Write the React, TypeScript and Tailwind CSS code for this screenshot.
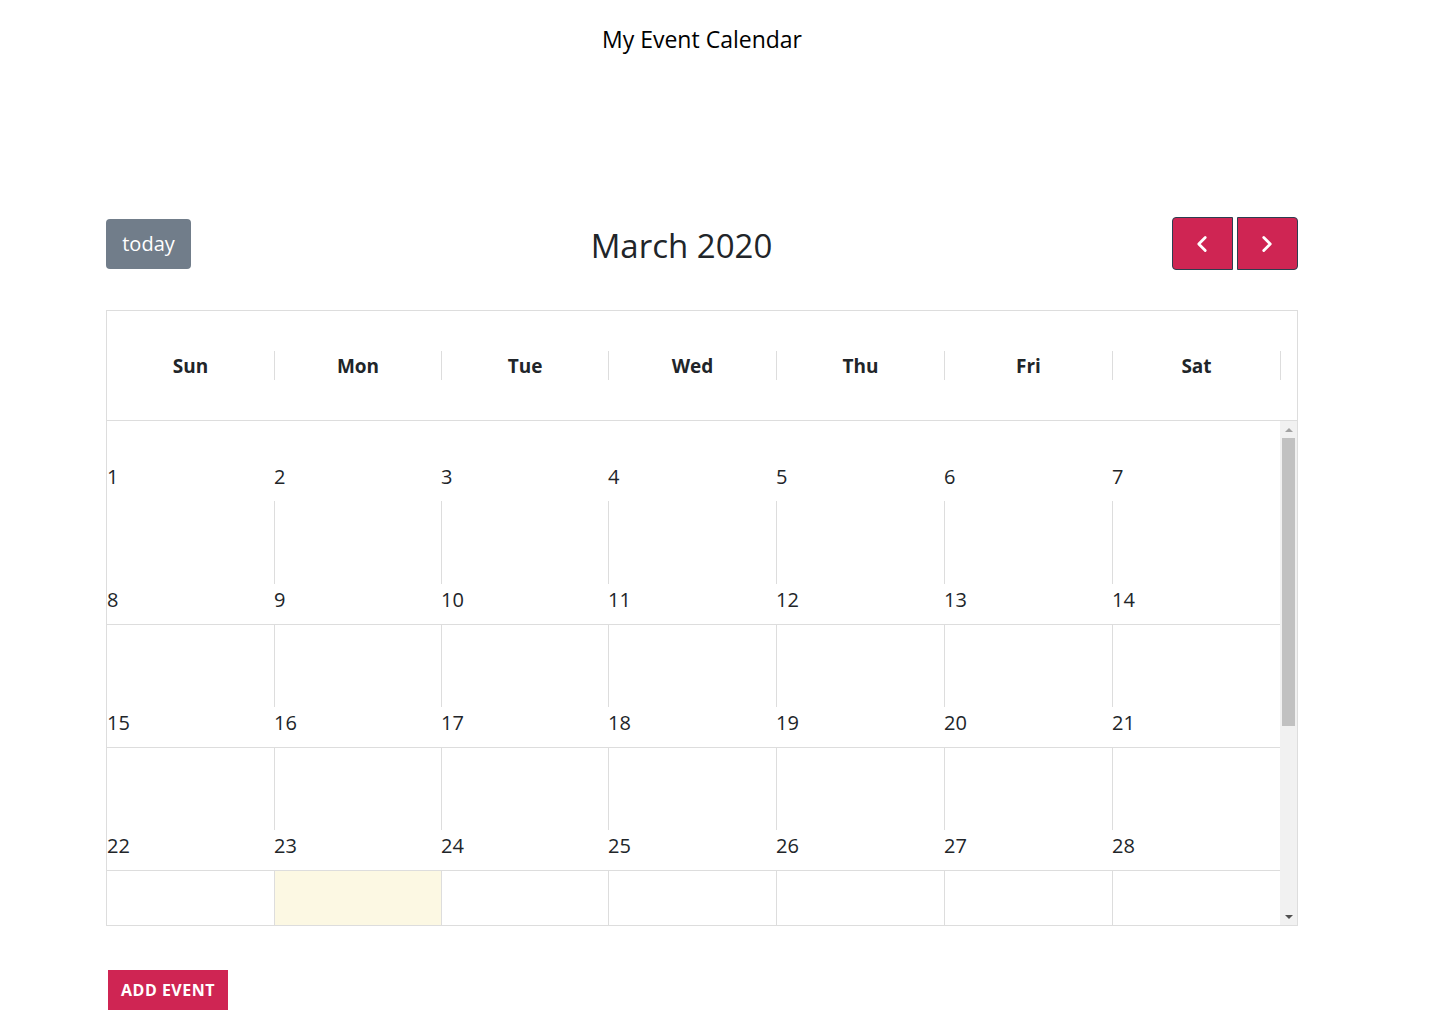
import { ChevronLeft, ChevronRight } from 'lucide-react'

const days = ['Sun', 'Mon', 'Tue', 'Wed', 'Thu', 'Fri', 'Sat']
const weeks = [
  [1, 2, 3, 4, 5, 6, 7],
  [8, 9, 10, 11, 12, 13, 14],
  [15, 16, 17, 18, 19, 20, 21],
  [22, 23, 24, 25, 26, 27, 28],
]

// column widths as measured (sum 1173)
const cols = 'grid grid-cols-[167px_167px_167px_168px_168px_168px_168px]'

function NumRow({ nums, border }: { nums: number[]; border?: boolean }) {
  return (
    <div className={`${cols} ${border ? 'h-[41px] border-b border-[#ddd]' : 'h-[40px]'}`}>
      {nums.map((n) => (
        <div key={n} className="pt-[4px] text-[20px] leading-[24px] text-[#212529]">{n}</div>
      ))}
    </div>
  )
}

function CellRow({ h, today }: { h: string; today?: number }) {
  return (
    <div className={`${cols} ${h}`}>
      {days.map((d, i) => (
        <div key={d} className={`${i > 0 ? 'border-l border-[#ddd]' : ''} ${today === i ? 'bg-[#fcf8e3]' : ''}`} />
      ))}
    </div>
  )
}

export default function App() {
  return (
    <div className="min-h-[1022px] bg-white font-['Open_Sans',sans-serif] text-[#212529]">
      <div className="ml-[106px] w-[1192px]">
        <div className="flex h-[78px] items-center justify-center text-[23px] text-black">My Event Calendar</div>

        <div className="mt-[139px] flex h-[53px] items-center justify-between">
          <button className="h-[50px] w-[85px] rounded-[4px] bg-[#717d8a] text-[20px] text-white">today</button>
          <h2 className="pt-[3px] text-[33px] font-medium leading-none text-[#212529]">March 2020</h2>
          <div className="flex gap-[4px]">
            <button className="flex h-[53px] w-[61px] items-center justify-center rounded-l-[4px] border border-[#2c3e50] bg-[#cf2553] text-white" aria-label="prev">
              <ChevronLeft size={26} strokeWidth={2.6} />
            </button>
            <button className="flex h-[53px] w-[61px] items-center justify-center rounded-r-[4px] border border-[#2c3e50] bg-[#cf2553] text-white" aria-label="next">
              <ChevronRight size={26} strokeWidth={2.6} />
            </button>
          </div>
        </div>

        <div className="mt-[40px] border border-[#ddd]">
          <div className="flex h-[110px] items-center border-b border-[#ddd]">
            <div className={cols}>
              {days.map((d, i) => (
                <div key={d} className={`flex h-[29px] items-center justify-center pt-[2px] text-[19px] font-bold ${i > 0 ? 'border-l border-[#ddd]' : ''}`}>{d}</div>
              ))}
            </div>
            <div className="h-[29px] w-[17px] border-l border-[#ddd]" />
          </div>

          <div className="flex h-[504px]">
            <div className="flex flex-1 flex-col overflow-hidden">
              <div className="h-[40px] shrink-0" />
              <NumRow nums={weeks[0]} />
              <CellRow h="h-[83px]" />
              <NumRow nums={weeks[1]} border />
              <CellRow h="h-[82px]" />
              <NumRow nums={weeks[2]} border />
              <CellRow h="h-[82px]" />
              <NumRow nums={weeks[3]} border />
              <CellRow h="flex-1" today={1} />
            </div>
            {/* scrollbar */}
            <div className="flex w-[17px] flex-col bg-[#f1f1f1]">
              <div className="flex h-[17px] items-center justify-center">
                <div className="h-0 w-0 border-x-[4px] border-b-[4px] border-x-transparent border-b-[#a3a3a3]" />
              </div>
              <div className="mx-[2px] h-[288px] bg-[#c1c1c1]" />
              <div className="flex-1" />
              <div className="flex h-[17px] items-center justify-center">
                <div className="h-0 w-0 border-x-[4px] border-t-[4px] border-x-transparent border-t-[#505050]" />
              </div>
            </div>
          </div>
        </div>

        <button className="ml-[2px] mt-[44px] h-[40px] w-[120px] bg-[#cf2553] text-[16px] font-bold uppercase tracking-[0.5px] text-white">Add Event</button>
      </div>
    </div>
  )
}
